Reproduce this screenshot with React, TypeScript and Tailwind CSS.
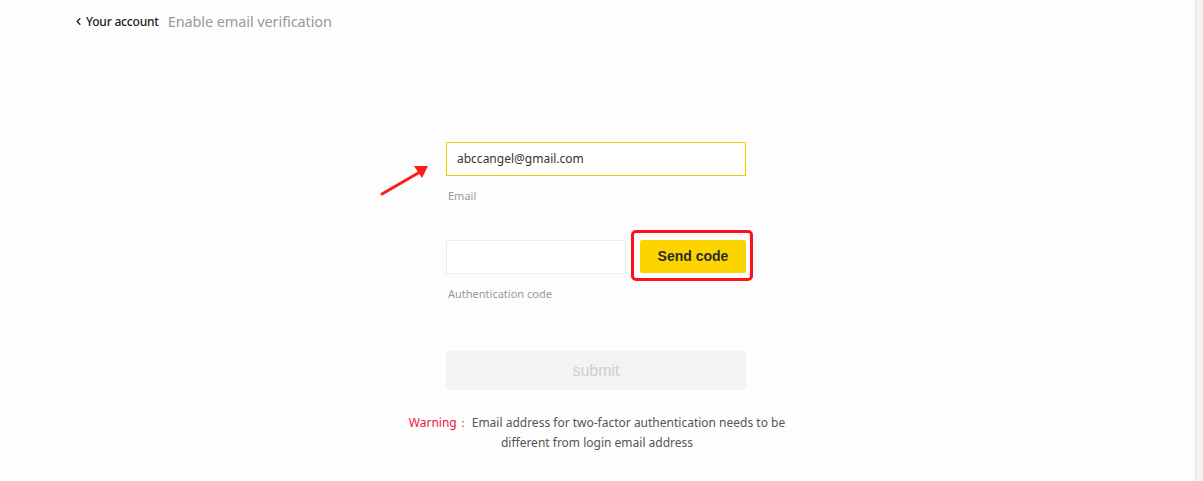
import { ChevronLeft } from 'lucide-react'

export default function App() {
    return (
        <div className="w-[1203px] h-[481px] flex bg-[#fdfdfd] font-['Noto_Sans',sans-serif] overflow-hidden">
            <div className="flex-1 flex flex-col">
                {/* Breadcrumb */}
                <header className="flex items-center pl-[73px] pt-[11px] h-[32px]">
                    <ChevronLeft size={11} strokeWidth={3} className="text-[#222]" />
                    <span className="ml-[2px] text-[12px] font-medium text-[#222] tracking-[-0.2px]">Your account</span>
                    <span className="ml-[9px] text-[14.5px] text-[#999] tracking-[-0.1px]">Enable email verification</span>
                </header>

                {/* Form */}
                <div className="w-[300px] ml-[446px] mt-[110px] flex flex-col">
                    <div className="relative">
                        <div className="h-[34px] border border-[#f0d000] bg-white flex items-center px-[10px] text-[12px] text-[#333]">
                            abccangel@gmail.com
                        </div>
                        {/* annotation arrow */}
                        <svg className="absolute left-[-66px] top-[18px]" width="52" height="36" viewBox="0 0 52 36">
                            <path d="M2 34 L40 12" stroke="#ff1a1a" strokeWidth="3" strokeLinecap="round" />
                            <path d="M34 6 L48 6 L42 18 Z" fill="#ff1a1a" />
                        </svg>
                    </div>
                    <label className="mt-[12px] pl-[2px] text-[11px] text-[#999]">Email</label>

                    <div className="mt-[35px] flex items-center">
                        <div className="w-[180px] h-[34px] border border-[#ebebf2] bg-white" />
                        <div className="relative ml-[14px]">
                            <button className="w-[106px] h-[33px] rounded-[2px] bg-[#fcd400] text-[14px] font-bold text-[#2b2b2b] font-['Liberation_Sans',sans-serif]">
                                Send code
                            </button>
                            <span className="absolute left-[-9px] right-[-7px] top-[-10px] bottom-[-8px] border-[3px] border-[#ff0f17] rounded-[5px] pointer-events-none" />
                        </div>
                    </div>
                    <label className="mt-[12px] pl-[2px] text-[11px] text-[#999]">Authentication code</label>

                    <button className="mt-[49px] h-[39px] rounded-[3px] bg-[#f3f3f3] text-[16px] text-[#cfcfcf] font-['Liberation_Sans',sans-serif]">
                        submit
                    </button>
                </div>

                {/* Warning */}
                <div className="mt-[23px] w-[400px] ml-[397px] flex justify-center">
                    <p className="text-center text-[12px] leading-[20px] text-[#555]">
                        <span className="text-[#f0143c]">Warning：</span>
                        <span className="ml-[3px]">Email address for two-factor authentication needs to be different from login email address</span>
                    </p>
                </div>
            </div>

            {/* Scrollbar track */}
            <div className="w-[8px] h-full bg-[#f3f3f3] border-l border-[#e6e4f0]" />
        </div>
    )
}
